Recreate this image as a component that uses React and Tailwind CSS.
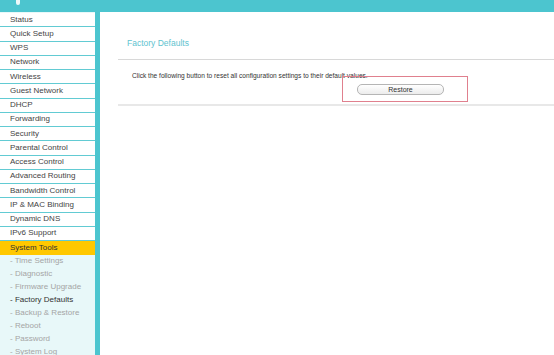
const MAIN = [
  'Status',
  'Quick Setup',
  'WPS',
  'Network',
  'Wireless',
  'Guest Network',
  'DHCP',
  'Forwarding',
  'Security',
  'Parental Control',
  'Access Control',
  'Advanced Routing',
  'Bandwidth Control',
  'IP & MAC Binding',
  'Dynamic DNS',
  'IPv6 Support',
]

const SUB = [
  'Time Settings',
  'Diagnostic',
  'Firmware Upgrade',
  'Factory Defaults',
  'Backup & Restore',
  'Reboot',
  'Password',
  'System Log',
]

export default function App() {
  return (
    <div className="h-[355px] w-[554px] overflow-hidden bg-white font-['Liberation_Sans',Arial,sans-serif]">
      {/* top bar */}
      <div className="relative h-[12px] bg-[#4cc5cf]">
        <div className="absolute left-[16px] top-0 h-[5px] w-[4px] rounded-b-sm bg-white/90" />
      </div>

      <div className="flex h-[343px]">
        {/* sidebar */}
        <div className="w-[95px] shrink-0 bg-[#e8f8f9] pt-[1px]">
          {MAIN.map((m) => (
            <div
              key={m}
              className="box-border flex h-[14.25px] items-center border-b border-[#62cbd3] bg-white pl-[10px] text-[8px] text-[#444]"
            >
              {m}
            </div>
          ))}
          <div className="flex h-[13.5px] items-center bg-[#ffc800] pl-[10px] text-[8px] text-[#333]">
            System Tools
          </div>
          {SUB.map((s) => (
            <div
              key={s}
              className={`flex h-[13px] items-center pl-[10px] text-[8px] ${
                s === 'Factory Defaults' ? 'text-[#333]' : 'text-[#a5a5a5]'
              }`}
            >
              - {s}
            </div>
          ))}
        </div>

        {/* divider */}
        <div className="w-[5px] shrink-0 bg-[#4cc5cf]" />

        {/* content */}
        <div className="flex-1 pt-[25px]">
          <div className="h-[12px] pl-[27px] text-[8.5px] leading-[12px] text-[#5ec3cf]">
            Factory Defaults
          </div>
          <div className="relative ml-[18px] mt-[10px] border-t border-b-2 border-t-[#d8d8d8] border-b-[#e8e8e8] pb-[9px] pt-[11px]">
            <p className="pl-[14px] text-[6.6px] leading-[9px] text-[#333]">
              Click the following button to reset all configuration settings to their default values.
            </p>
            <div className="mt-[4px] pl-[239px]">
              <button className="flex h-[11px] w-[87px] items-center justify-center rounded-[5px] border border-[#b5b5b5] bg-gradient-to-b from-white to-[#ececec] text-[7px] leading-none text-[#333]">
                Restore
              </button>
            </div>
            {/* red annotation box */}
            <div className="absolute left-[224px] top-[16px] h-[26px] w-[126px] border border-[#e0808e]" />
          </div>
        </div>
      </div>
    </div>
  )
}
